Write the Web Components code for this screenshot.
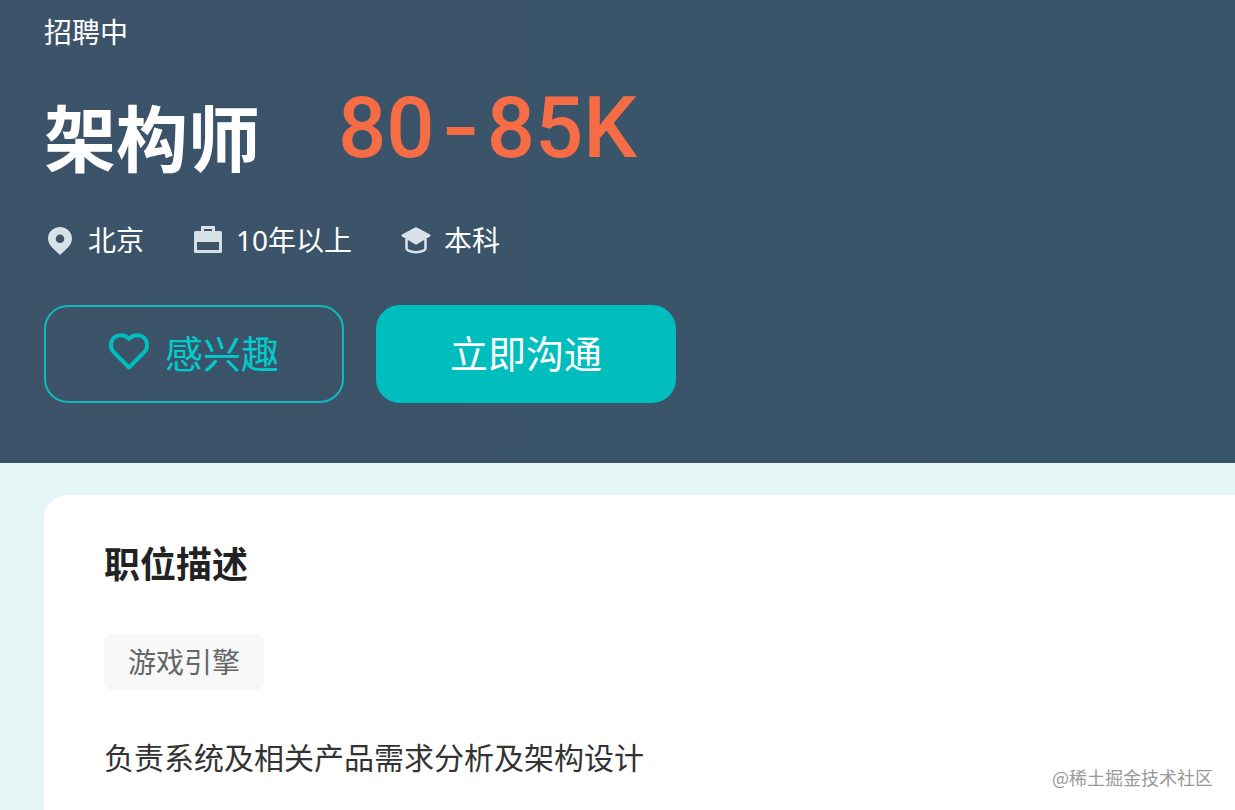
<!DOCTYPE html>
<html lang="zh-CN">
<head>
<meta charset="UTF-8">
<meta name="viewport" content="width=device-width, initial-scale=1">
<title>架构师</title>
<style>
  body {
    margin: 0;
    min-height: 100vh;
    display: flex;
    flex-direction: column;
    font-family: "Noto Sans", "Noto Sans CJK SC", sans-serif;
    background: #e5f5f5;
  }
</style>
</head>
<body>
<job-banner>
  <span slot="status">招聘中</span>
  <span slot="title">架构师</span>
  <job-salary slot="salary" from="80" to="85K"></job-salary>
  <job-fact slot="facts" icon="place">北京</job-fact>
  <job-fact slot="facts" icon="case">10年以上</job-fact>
  <job-fact slot="facts" icon="degree">本科</job-fact>
  <action-button slot="actions" icon="heart">感兴趣</action-button>
  <action-button slot="actions" primary>立即沟通</action-button>
</job-banner>
<job-detail>
  <span slot="heading">职位描述</span>
  <job-tag slot="tags">游戏引擎</job-tag>
  负责系统及相关产品需求分析及架构设计
</job-detail>
<water-mark>@稀土掘金技术社区</water-mark>

<script>
const icons = {
  place: `<svg width="32" height="32" viewBox="0 0 32 32" fill="currentColor" aria-hidden="true">
    <path fill-rule="evenodd" d="M16 3C9.300 3 4 8.200 4 14.600c0 4 2.400 7.600 5.600 10.500L16 31l6.400-5.900C25.600 22.200 28 18.600 28 14.600 28 8.200 22.700 3 16 3Zm0 7.500a4.300 4.300 0 1 1 0 8.600 4.300 4.300 0 0 1 0-8.600Z"/></svg>`,
  case: `<svg width="32" height="32" viewBox="0 0 32 32" fill="currentColor" aria-hidden="true">
    <path fill-rule="evenodd" d="M10 2h12a1 1 0 0 1 1 1v4h5.500A1.500 1.500 0 0 1 30 8.500v19a1.500 1.500 0 0 1-1.500 1.500h-25A1.500 1.500 0 0 1 2 27.500v-19A1.500 1.500 0 0 1 3.500 7H9V3a1 1 0 0 1 1-1Zm2 3v2h8V5ZM5 18v8h22v-8Z"/></svg>`,
  degree: `<svg width="32" height="32" viewBox="0 0 32 32" aria-hidden="true">
    <path fill="currentColor" d="M15 3.400q1-.5 2 0l13 7.200q1.500 1 0 2l-13 7.600q-1 .6-2 0L2 12.600q-1.500-1 0-2Z"/>
    <path fill="none" stroke="currentColor" stroke-width="2.600" stroke-linejoin="round" d="M6.500 15v9q0 1.600 1.500 2.400c4.500 2.500 11.500 2.500 16 0q1.500-.8 1.500-2.400V15"/></svg>`,
  heart: `<svg width="40" height="40" viewBox="1 3 40 40" fill="none" stroke="currentColor" stroke-width="4" stroke-linejoin="round" aria-hidden="true">
    <path d="M21 37.500 5.700 22.200C2 18.400 2 11.800 5.600 8.200 9.600 4.200 16.600 4.200 21 8.800c4.400-4.600 11.400-4.600 15.400-.6 3.600 3.600 3.600 10.200-.1 14Z"/></svg>`
};

class JobBanner extends HTMLElement {
  constructor() {
    super();
    this.attachShadow({ mode: "open" }).innerHTML = `
      <style>
        :host {
          display: block;
          padding: 12px 44px 60px;
          color: #fff;
          background: linear-gradient(90deg, #3c536a, #385569);
        }
        .status { font-size: 28px; line-height: 40px; }
        .headline {
          display: flex;
          flex-wrap: wrap;
          align-items: flex-start;
          gap: 0 78px;
          margin-top: 34px;
        }
        h1 { margin: 0; font-size: 72px; line-height: 104px; font-weight: 700; }
        .facts {
          display: flex;
          flex-wrap: wrap;
          gap: 16px 48px;
          margin-top: 30px;
        }
        .actions {
          display: flex;
          flex-wrap: wrap;
          gap: 16px 32px;
          margin-top: 45px;
        }
      </style>
      <div class="status"><slot name="status"></slot></div>
      <div class="headline">
        <h1><slot name="title"></slot></h1>
        <slot name="salary"></slot>
      </div>
      <div class="facts"><slot name="facts"></slot></div>
      <div class="actions"><slot name="actions"></slot></div>
    `;
  }
}

class JobSalary extends HTMLElement {
  constructor() {
    super();
    this.attachShadow({ mode: "open" }).innerHTML = `
      <style>
        :host {
          display: block;
          padding-top: 3px;
          color: #f56c45;
          font: 500 85px/76px Roboto, sans-serif;
          white-space: nowrap;
        }
        .dash {
          display: inline-block;
          width: 52px;
          text-align: center;
          font-family: Inter, sans-serif;
        }
      </style>
      ${this.getAttribute("from")}<span class="dash">-</span>${this.getAttribute("to")}
    `;
  }
}

class JobFact extends HTMLElement {
  constructor() {
    super();
    this.attachShadow({ mode: "open" }).innerHTML = `
      <style>
        :host {
          display: flex;
          align-items: center;
          gap: 12px;
          font-size: 28px;
          line-height: 40px;
        }
        svg { color: #d8e0e8; }
      </style>
      ${icons[this.getAttribute("icon")]}
      <span><slot></slot></span>
    `;
  }
}

class ActionButton extends HTMLElement {
  constructor() {
    super();
    this.attachShadow({ mode: "open" }).innerHTML = `
      <style>
        :host { display: block; }
        button {
          display: flex;
          align-items: center;
          justify-content: center;
          gap: 16px;
          box-sizing: border-box;
          min-width: 300px;
          height: 98px;
          padding: 0 24px 2px;
          border: 2px solid #13b9b9;
          border-radius: 24px;
          color: #0cc;
          background: transparent;
          font: inherit;
          font-size: 38px;
          line-height: 56px;
          cursor: pointer;
        }
        :host([primary]) button { color: #fff; background: #00bebd; border-color: #00bebd; }
        svg { color: #00bebd; }
      </style>
      <button type="button">${icons[this.getAttribute("icon")] || ""}<span><slot></slot></span></button>
    `;
  }
}

class JobDetail extends HTMLElement {
  constructor() {
    super();
    this.attachShadow({ mode: "open" }).innerHTML = `
      <style>
        :host {
          display: block;
          flex: 1;
          box-sizing: border-box;
          margin: 32px 0 0 44px;
          padding: 44px 60px 24px;
          border-radius: 24px 0 0 0;
          color: #333;
          background: #fff;
        }
        h2 { margin: 0; color: #222; font-size: 36px; line-height: 52px; font-weight: 700; }
        .tags { display: flex; flex-wrap: wrap; gap: 16px; margin-top: 43px; }
        p { margin: 44px 0 0; font-size: 30px; line-height: 48px; }
      </style>
      <h2><slot name="heading"></slot></h2>
      <div class="tags"><slot name="tags"></slot></div>
      <p><slot></slot></p>
    `;
  }
}

class JobTag extends HTMLElement {
  constructor() {
    super();
    this.attachShadow({ mode: "open" }).innerHTML = `
      <style>
        :host {
          display: block;
          padding: 8px 24px;
          border-radius: 8px;
          color: #666;
          background: #f8f8f8;
          font-size: 28px;
          line-height: 40px;
        }
      </style>
      <slot></slot>
    `;
  }
}

class WaterMark extends HTMLElement {
  constructor() {
    super();
    this.attachShadow({ mode: "open" }).innerHTML = `
      <style>
        :host {
          position: absolute;
          right: 22px;
          bottom: 20px;
          color: #999;
          font-family: "Noto Sans CJK SC", sans-serif;
          font-size: 18px;
          line-height: 26px;
        }
      </style>
      <slot></slot>
    `;
  }
}

customElements.define("job-banner", JobBanner);
customElements.define("job-salary", JobSalary);
customElements.define("job-fact", JobFact);
customElements.define("action-button", ActionButton);
customElements.define("job-detail", JobDetail);
customElements.define("job-tag", JobTag);
customElements.define("water-mark", WaterMark);
</script>
</body>
</html>
